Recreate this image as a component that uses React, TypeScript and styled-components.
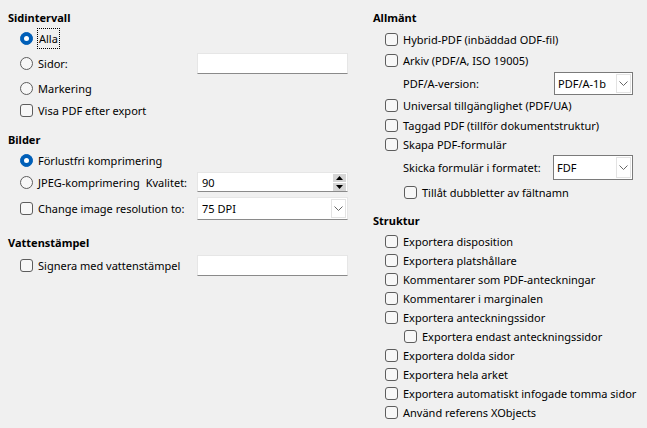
import React from "react";
import styled, { createGlobalStyle } from "styled-components";

const Global = createGlobalStyle`
  html, body { margin: 0; padding: 0; background: #f0f0f0; }
  body {
    font-family: "Noto Sans", "DejaVu Sans", sans-serif;
    font-size: 11px;
    color: #000;
  }
`;

const Page = styled.div`
  width: 647px;
  height: 428px;
  box-sizing: border-box;
  padding: 8px 14px 0 8px;
  display: grid;
  grid-template-columns: 340px 260px;
  column-gap: 25px;
  align-items: start;
`;

const Column = styled.div<{ $mt?: number }>`
  display: flex;
  flex-direction: column;
  margin-top: ${(p) => p.$mt ?? 0}px;
`;

const Heading = styled.div<{ $mt?: number }>`
  height: 18px;
  display: flex;
  align-items: center;
  font-weight: 700;
  margin-top: ${(p) => p.$mt ?? 0}px;
`;

const Row = styled.div<{ $h: number; $indent?: number; $mt?: number }>`
  height: ${(p) => p.$h}px;
  display: flex;
  align-items: center;
  padding-left: ${(p) => p.$indent ?? 12}px;
  margin-top: ${(p) => p.$mt ?? 0}px;
  white-space: nowrap;
`;

const Label = styled.span<{ $grow?: boolean; $focus?: boolean; $ml?: number }>`
  flex: ${(p) => (p.$grow ? "1 1 auto" : "0 0 auto")};
  margin-left: ${(p) => p.$ml ?? 0}px;
  padding: ${(p) => (p.$focus ? "2px 1px" : "0")};
  outline: ${(p) => (p.$focus ? "1px dotted #000" : "none")};
  outline-offset: 0;
`;

const RadioDot = styled.span<{ $on?: boolean }>`
  flex: 0 0 auto;
  box-sizing: border-box;
  width: 13px;
  height: 13px;
  border-radius: 50%;
  margin-right: 5px;
  display: flex;
  align-items: center;
  justify-content: center;
  background: ${(p) => (p.$on ? "#005fb8" : "#f7f7f7")};
  border: 1px solid ${(p) => (p.$on ? "#005fb8" : "#5d5d5d")};
  &::after {
    content: "";
    display: ${(p) => (p.$on ? "block" : "none")};
    width: 5px;
    height: 5px;
    border-radius: 50%;
    background: #fff;
  }
`;

const CheckBox = styled.span`
  flex: 0 0 auto;
  box-sizing: border-box;
  width: 13px;
  height: 13px;
  border-radius: 3px;
  border: 1px solid #5d5d5d;
  background: #f7f7f7;
  margin-right: 5px;
`;

const Field = styled.div<{ $w: number; $h: number; $framed?: boolean }>`
  flex: 0 0 auto;
  box-sizing: border-box;
  width: ${(p) => p.$w}px;
  height: ${(p) => p.$h}px;
  background: #fff;
  border: 1px solid ${(p) => (p.$framed ? "#7a7a7a" : "#e6e6e6")};
  border-bottom-color: ${(p) => (p.$framed ? "#7a7a7a" : "#8a8a8a")};
  display: flex;
  align-items: center;
  padding-left: ${(p) => (p.$framed ? 3 : 4)}px;
`;

const FieldText = styled.span`
  flex: 1 1 auto;
  white-space: nowrap;
`;

const DropButton = styled.span`
  flex: 0 0 auto;
  box-sizing: border-box;
  align-self: stretch;
  width: 15px;
  margin: 1px 1px 1px 0;
  border: 1px solid #e3e3e3;
  display: flex;
  align-items: center;
  justify-content: center;
  background: #fff;
`;

const Spin = styled.span`
  flex: 0 0 auto;
  display: flex;
  flex-direction: column;
  gap: 1px;
  margin-right: 1px;
`;

const SpinBtn = styled.span`
  width: 13px;
  height: 8px;
  background: #d6d6d6;
  display: flex;
  align-items: center;
  justify-content: center;
`;

const Chevron = () => (
  <svg width="9" height="5" viewBox="0 0 9 5">
    <polyline points="0.5,0.5 4.5,4.5 8.5,0.5" fill="none" stroke="#666" strokeWidth="1" />
  </svg>
);

const Tri = ({ up }: { up?: boolean }) => (
  <svg width="7" height="4" viewBox="0 0 7 4">
    <polygon points={up ? "0,4 7,4 3.5,0" : "0,0 7,0 3.5,4"} fill="#000" />
  </svg>
);

const Radio = ({ on, label, h, focus }: { on?: boolean; label: string; h: number; focus?: boolean }) => (
  <Row $h={h}>
    <RadioDot $on={on} />
    <Label $focus={focus}>{label}</Label>
  </Row>
);

const Check = ({ label, h, indent, mt }: { label: string; h: number; indent?: number; mt?: number }) => (
  <Row $h={h} $indent={indent} $mt={mt}>
    <CheckBox />
    <Label>{label}</Label>
  </Row>
);

const strukturItems: [string, number?][] = [
  ["Exportera disposition"],
  ["Exportera platshållare"],
  ["Kommentarer som PDF-anteckningar"],
  ["Kommentarer i marginalen"],
  ["Exportera anteckningssidor"],
  ["Exportera endast anteckningssidor", 31],
  ["Exportera dolda sidor"],
  ["Exportera hela arket"],
  ["Exportera automatiskt infogade tomma sidor"],
  ["Använd referens XObjects"],
];

export default function App() {
  return (
    <>
      <Global />
      <Page>
        <Column>
          <Heading>Sidintervall</Heading>
          <Radio on focus label="Alla" h={24} />
          <Row $h={26}>
            <RadioDot />
            <Label $grow>Sidor:</Label>
            <Field $w={151} $h={21} />
          </Row>
          <Radio label="Markering" h={24} />
          <Check label="Visa PDF efter export" h={20} />

          <Heading $mt={10}>Bilder</Heading>
          <Radio on label="Förlustfri komprimering" h={24} />
          <Row $h={20}>
            <RadioDot />
            <Label>JPEG-komprimering</Label>
            <Label $grow $ml={6}>Kvalitet:</Label>
            <Field $w={151} $h={20}>
              <FieldText>90</FieldText>
              <Spin>
                <SpinBtn><Tri up /></SpinBtn>
                <SpinBtn><Tri /></SpinBtn>
              </Spin>
            </Field>
          </Row>
          <Row $h={32}>
            <CheckBox />
            <Label $grow>Change image resolution to:</Label>
            <Field $w={151} $h={23}>
              <FieldText>75 DPI</FieldText>
              <DropButton><Chevron /></DropButton>
            </Field>
          </Row>

          <Heading $mt={9}>Vattenstämpel</Heading>
          <Row $h={28}>
            <CheckBox />
            <Label $grow>Signera med vattenstämpel</Label>
            <Field $w={151} $h={21} />
          </Row>
        </Column>

        <Column>
          <Heading>Allmänt</Heading>
          <Check label="Hybrid-PDF (inbäddad ODF-fil)" h={22} mt={2} />
          <Check label="Arkiv (PDF/A, ISO 19005)" h={21} />
          <Row $h={24} $indent={30}>
            <Label $grow>PDF/A-version:</Label>
            <Field $w={79} $h={23} $framed>
              <FieldText>PDF/A-1b</FieldText>
              <DropButton><Chevron /></DropButton>
            </Field>
          </Row>
          <Check label="Universal tillgänglighet (PDF/UA)" h={21} />
          <Check label="Taggad PDF (tillför dokumentstruktur)" h={19} />
          <Check label="Skapa PDF-formulär" h={19} />
          <Row $h={26} $indent={30}>
            <Label $grow>Skicka formulär i formatet:</Label>
            <Field $w={80} $h={25} $framed>
              <FieldText>FDF</FieldText>
              <DropButton><Chevron /></DropButton>
            </Field>
          </Row>
          <Check label="Tillåt dubbletter av fältnamn" h={24} indent={31} />

          <Heading $mt={7}>Struktur</Heading>
          <Column $mt={3}>
            {strukturItems.map(([t, ind]) => (
              <Check key={t} label={t} h={19} indent={ind} />
            ))}
          </Column>
        </Column>
      </Page>
    </>
  );
}
